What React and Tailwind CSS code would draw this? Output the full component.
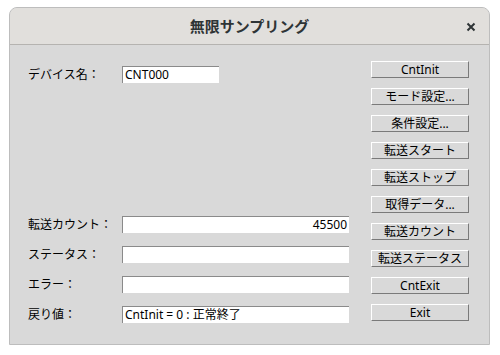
import React from 'react';

const font = { fontFamily: '"Noto Sans", "Noto Sans CJK JP", sans-serif' };

const Field = ({ label, value = '', wide = true, right = false }) => (
    <div className="flex items-center h-[17px]">
        <span className="w-[94px] text-[12px] text-black leading-none pt-[1px]">{label}</span>
        <div className={`${wide ? 'w-[227px]' : 'w-[97px]'} h-[17px] bg-white border-t border-l border-[#8a8a8a] flex items-center px-[2px] text-[12px] leading-none text-black ${right ? 'justify-end' : ''}`}>
            {value}
        </div>
    </div>
);

const Btn = ({ children }) => (
    <button className="w-[98px] h-[17px] bg-[#d9d9d9] border-t border-l border-white border-r border-b border-r-[#7a7a7a] border-b-[#7a7a7a] text-[12px] leading-none text-black flex items-center justify-center">
        {children}
    </button>
);

export default function App() {
    const buttons = ['CntInit', 'モード設定...', '条件設定...', '転送スタート', '転送ストップ', '取得データ...', '転送カウント', '転送ステータス', 'CntExit', 'Exit'];
    return (
        <div className="w-[500px] h-[355px] bg-white pt-[7px] pl-[9px]" style={font}>
            <div className="w-[481px] h-[338px] flex flex-col border border-[#bdbdbd] rounded-t-[8px] overflow-hidden bg-[#d9d9d9]">
                <div className="h-[37px] shrink-0 bg-[#e1dfdc] border-b border-[#b5b3b0] relative flex items-center justify-center">
                    <span className="text-[15px] font-bold text-[#2e3436]">無限サンプリング</span>
                    <span className="absolute right-[13px] top-[14px]">
                        <svg width="10" height="10" viewBox="0 0 10 10">
                            <path d="M1.5 1.5 L8.5 8.5 M8.5 1.5 L1.5 8.5" stroke="#2e3436" strokeWidth="2" />
                        </svg>
                    </span>
                </div>
                <div className="flex flex-1">
                    <div className="pl-[18px] pt-[21px] flex flex-col">
                        <Field label="デバイス名：" value="CNT000" wide={false} />
                        <div className="mt-[133px] flex flex-col gap-[13px]">
                            <Field label="転送カウント：" value="45500" right />
                            <Field label="ステータス：" />
                            <Field label="エラー：" />
                            <Field label="戻り値：" value="CntInit = 0 : 正常終了" />
                        </div>
                    </div>
                    <div className="ml-[22px] pt-[16px] flex flex-col gap-[10px]">
                        {buttons.map(b => <Btn key={b}>{b}</Btn>)}
                    </div>
                </div>
            </div>
        </div>
    );
}
